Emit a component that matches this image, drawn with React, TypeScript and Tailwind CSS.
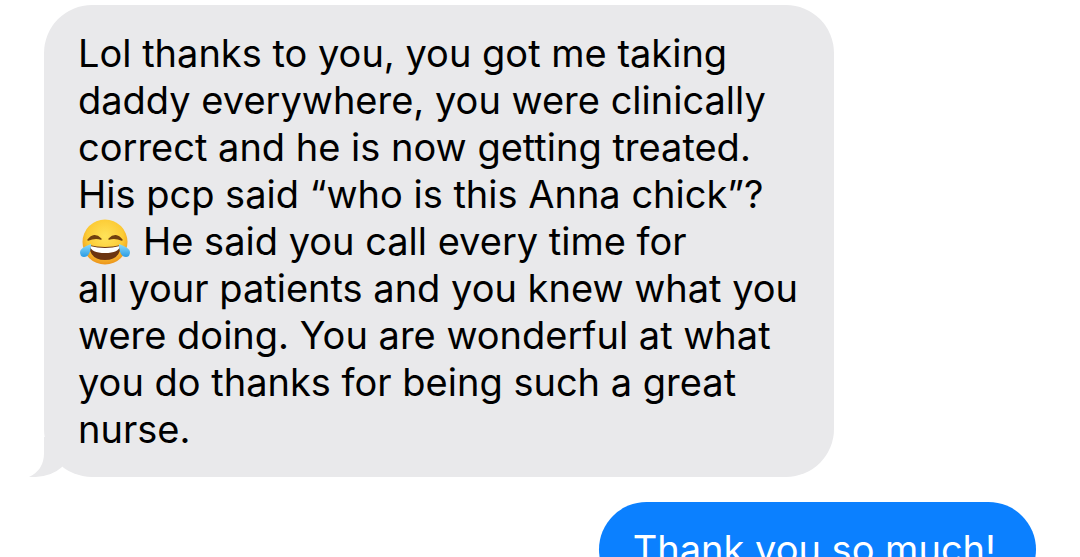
function JoyEmoji() {
  return (
    <svg viewBox="0 0 50 46" role="img" aria-label="Face with tears of joy" className="-mt-[11px] mr-[13px] -mb-[5px] ml-[2px] inline-block h-[46px] w-[50px] align-middle">
      <defs>
        <radialGradient id="face" cx="50%" cy="38%" r="62%">
          <stop offset="0" stopColor="#ffe35a" />
          <stop offset="0.65" stopColor="#fccb35" />
          <stop offset="1" stopColor="#ec941c" />
        </radialGradient>
        <linearGradient id="tear" x1="0" y1="0" x2="0" y2="1">
          <stop offset="0" stopColor="#8bdcfb" />
          <stop offset="1" stopColor="#2b9be4" />
        </linearGradient>
      </defs>
      <circle cx="25" cy="23" r="22.5" fill="url(#face)" />
      <path d="M9 26Q25 30 41 26Q40 41 25 41T9 26z" fill="#6b3410" />
      <path d="M10 27Q25 31 40 27Q39 34 25 34T10 27z" fill="#fff" />
      <path d="M8 21Q14 13 21 20Q15 18 8 21zM42 21Q36 13 29 20Q35 18 42 21z" fill="#71400f" stroke="#71400f" strokeWidth="1.4" strokeLinejoin="round" />
      <path d="M11 25Q0 29 0 33Q0 38 4 38C9 38 11 32 11 25zM39 25Q50 29 50 33Q50 38 46 38C41 38 39 32 39 25z" fill="url(#tear)" />
    </svg>
  );
}

export default function App() {
  return (
    <main className="h-screen overflow-hidden bg-white pt-[5px] font-['Inter','Liberation_Sans',sans-serif] text-[38px] leading-[47px] text-black">
      <div className="relative ml-11 w-fit rounded-[48px] bg-[#e9e9eb] pt-[25px] pr-9 pb-6 pl-[34px]">
        <svg viewBox="0 0 40 40" className="absolute bottom-0 -left-4 h-10 w-10 text-[#e9e9eb]">
          <path d="M16 0v16Q16 33 1 40Q22 41 34 30V0z" fill="currentColor" />
        </svg>
        <p className="relative">
          Lol thanks to you, you got me taking<br />
          daddy everywhere, you were clinically<br />
          correct and he is now getting treated.<br />
          His pcp said “who is this Anna chick”?<br />
          <JoyEmoji />He said you call every time for<br />
          all your patients and you knew what you<br />
          were doing. You are wonderful at what<br />
          you do thanks for being such a great<br />
          nurse.
        </p>
      </div>
      <div className="mt-[25px] mr-11 ml-auto w-fit rounded-[48px] bg-[#0b80ff] pt-6 pr-10 pb-6 pl-[34px] text-white">
        <p>Thank you so much!</p>
      </div>
    </main>
  );
}
